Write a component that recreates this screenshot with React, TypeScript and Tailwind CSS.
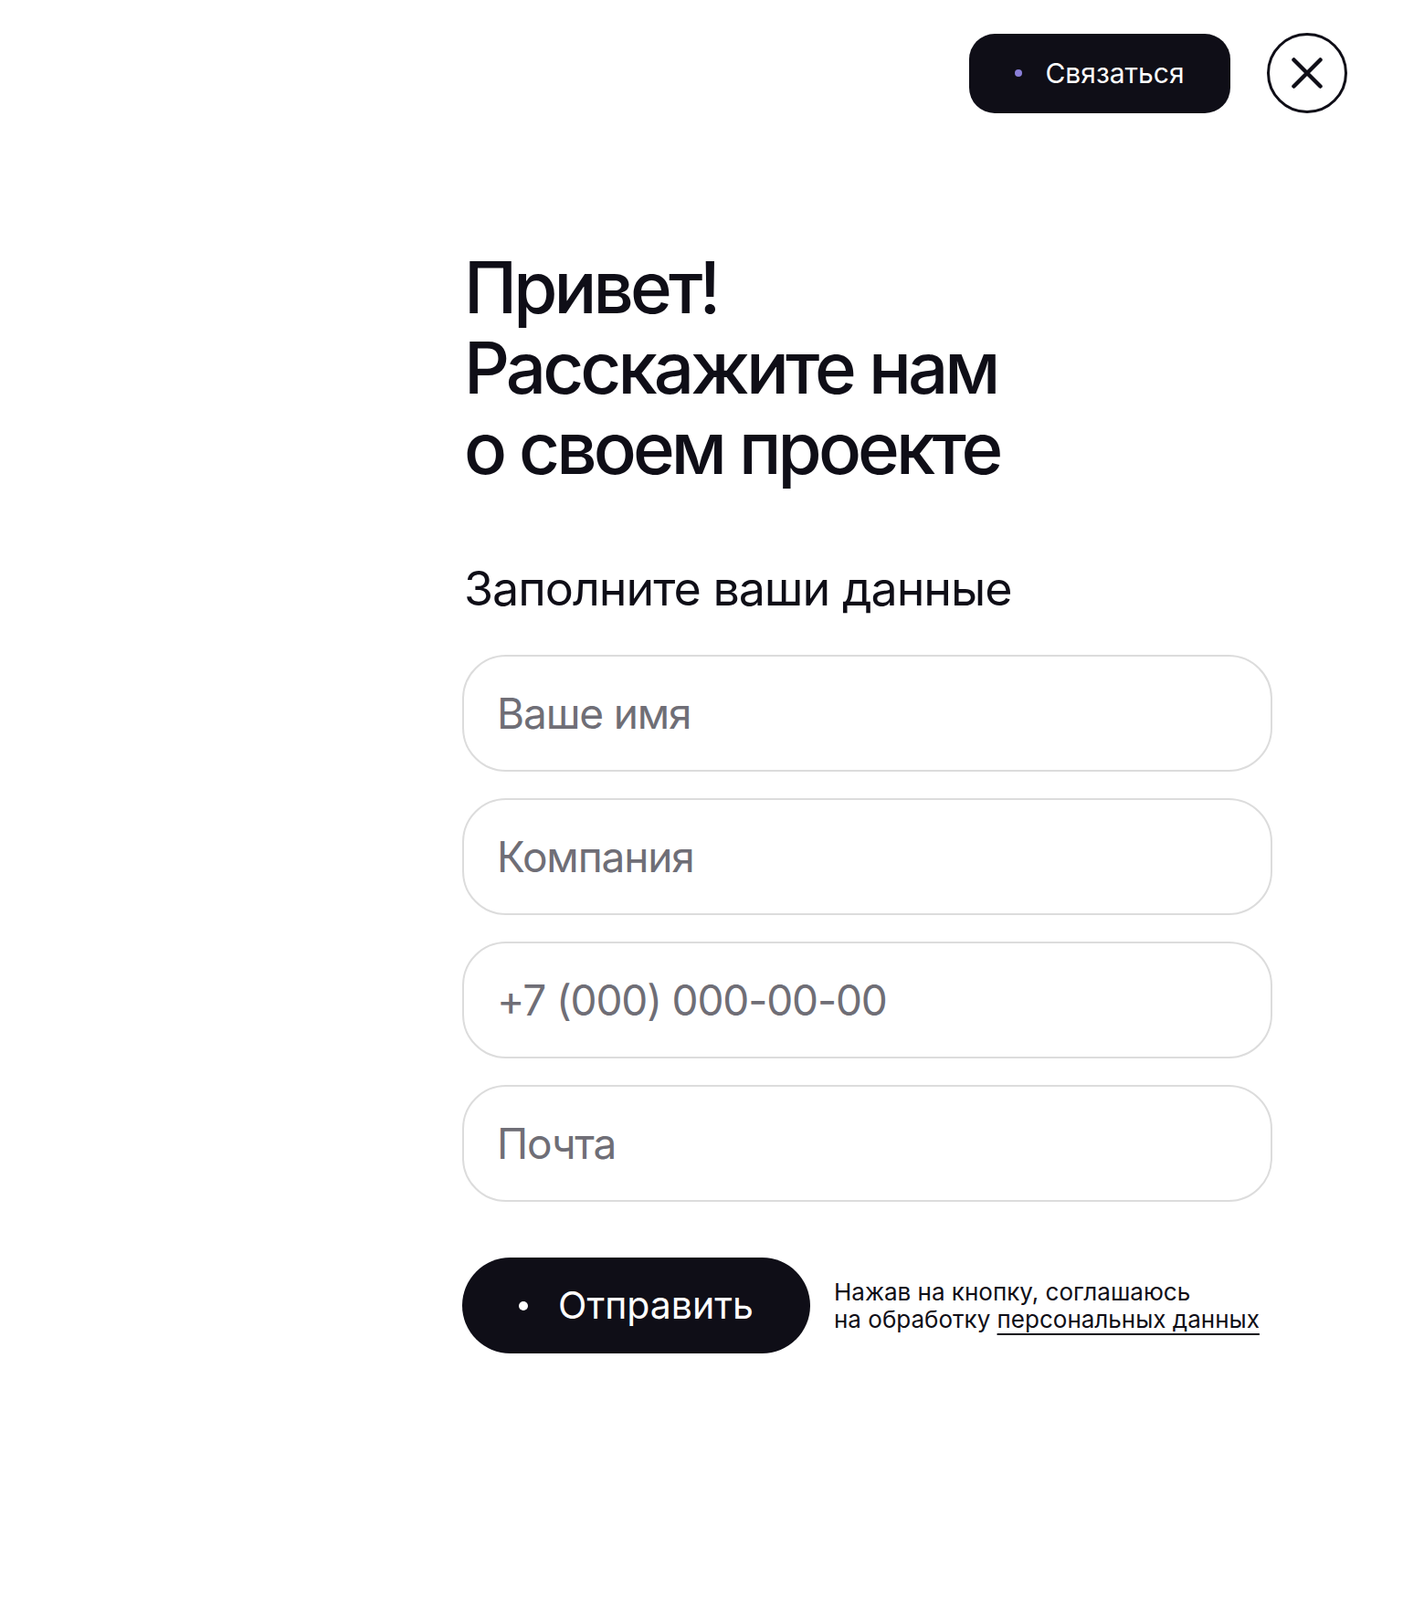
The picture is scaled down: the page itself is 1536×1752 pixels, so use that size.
import React from "react";

export default function App() {
  return (
    <div className="min-h-[1752px] w-full bg-white font-['Inter','Noto_Sans',sans-serif] text-[#0f0e17]">
      <header className="flex items-center justify-end gap-[40px] pr-[61px] pt-[36px]">
        <button className="flex h-[87px] w-[286px] items-center justify-center gap-[25px] rounded-[28px] bg-[#0f0e17] text-[30px] leading-none text-white">
          <span className="h-[8px] w-[8px] rounded-full bg-[#8a7fd8]" />
          <span>Связаться</span>
        </button>
        <button className="flex h-[88px] w-[88px] items-center justify-center rounded-full border-[3px] border-[#0f0e17]">
          <svg width="34" height="34" viewBox="0 0 34 34" fill="none">
            <path d="M2.5 2.5L31.5 31.5M31.5 2.5L2.5 31.5" stroke="#0f0e17" strokeWidth="4.5" strokeLinecap="round" />
          </svg>
        </button>
      </header>

      <main className="w-[1393px] pl-[506px]">
        <h1 className="mt-[147px] pl-[2px] text-[78px] font-medium leading-[88px] tracking-[-0.05em]">
          Привет!
          <br />
          Расскажите нам
          <br />
          о своем проекте
        </h1>
        <h2 className="mt-[80px] pl-[2px] text-[52px] font-normal leading-[60px] tracking-[-0.02em]">
          Заполните ваши данные
        </h2>

        <form className="mt-[42px] flex flex-col gap-[29px]">
          {["Ваше имя", "Компания", "+7 (000) 000-00-00", "Почта"].map((p) => (
            <input
              key={p}
              placeholder={p}
              className="h-[128px] w-full rounded-[48px] border-2 border-[#dcdcdc] bg-white px-[36px] text-[46px] tracking-[-0.025em] text-[#0f0e17] outline-none placeholder:text-[#6f6e76]"
            />
          ))}
        </form>

        <div className="mt-[61px] flex items-center gap-[26px]">
          <button className="flex h-[105px] w-[381px] items-center justify-center gap-[33px] rounded-full bg-[#0f0e17] text-[41px] leading-none text-white">
            <span className="h-[10px] w-[10px] rounded-full bg-white" />
            <span>Отправить</span>
          </button>
          <p className="text-[26px] leading-[30px] tracking-normal text-[#0f0e17]">
            Нажав на кнопку, соглашаюсь
            <br />
            на обработку{" "}
            <a className="underline decoration-[2px] underline-offset-[6px]">персональных данных</a>
          </p>
        </div>
      </main>
    </div>
  );
}
